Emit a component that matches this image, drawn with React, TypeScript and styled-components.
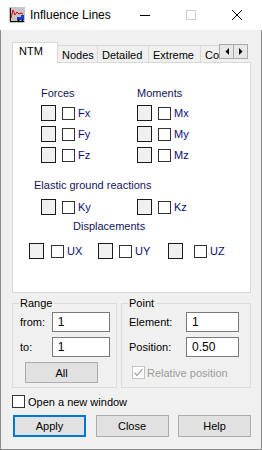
import React from 'react';
import styled, { createGlobalStyle } from 'styled-components';

const GlobalStyle = createGlobalStyle`
  html, body {
    margin: 0;
    padding: 0;
    background: #f0f0f0;
  }
  body {
    font-family: "Liberation Sans", Arial, sans-serif;
    font-size: 11px;
    color: #000;
  }
  * {
    box-sizing: border-box;
  }
`;

const Window = styled.div`
  width: 262px;
  height: 450px;
  display: flex;
  flex-direction: column;
  background: #f0f0f0;
  overflow: hidden;
`;

const TitleBar = styled.div`
  flex: none;
  height: 30px;
  display: flex;
  align-items: center;
  background: #fff;
  padding-left: 9px;
`;

const Title = styled.span`
  margin-left: 5px;
  font-size: 12px;
`;

const Controls = styled.div`
  margin-left: auto;
  margin-right: 2px;
  display: flex;
`;

const ControlButton = styled.div`
  width: 46px;
  height: 30px;
  display: flex;
  align-items: center;
  justify-content: center;
`;

const Body = styled.div`
  flex: 1;
  display: flex;
  flex-direction: column;
  padding: 12px 10px 0 11px;
  border: 1px solid #8c8c8c;
  border-top: none;
`;

// tabs
const TabStrip = styled.div`
  flex: none;
  display: flex;
  height: 21px;
  margin-bottom: -1px;
  position: relative;
  z-index: 1;
`;

const Tabs = styled.div`
  display: flex;
  align-items: flex-end;
  width: 207px;
  overflow: hidden;
`;

const Tab = styled.div<{ $w: number; $active?: boolean; $first?: boolean }>`
  flex: none;
  width: ${(p) => p.$w}px;
  height: ${(p) => (p.$active ? 21 : 18)}px;
  padding: ${(p) => (p.$active ? 1 : 2)}px 0 0 ${(p) => (p.$active ? 6 : 4)}px;
  line-height: 14px;
  white-space: nowrap;
  background: ${(p) => (p.$active ? '#fff' : '#f0f0f0')};
  border-top: 1px solid #d9d9d9;
  border-right: 1px solid #d9d9d9;
  border-left: ${(p) => (p.$first ? '1px solid #d9d9d9' : 'none')};
  border-bottom: ${(p) => (p.$active ? 'none' : '1px solid #d9d9d9')};
`;

const Scroller = styled.div`
  display: flex;
  margin-top: 2px;
  height: 15px;
`;

const ScrollButton = styled.div`
  width: 15px;
  height: 15px;
  display: flex;
  align-items: center;
  justify-content: center;
  background: #e6e6e6;
  border: 1px solid #a9a9a9;
  & + & {
    border-left: none;
    width: 14px;
  }
`;

const Panel = styled.div`
  flex: none;
  height: 231px;
  background: #fff;
  border: 1px solid #d9d9d9;
  padding-top: 23px;
`;

const Columns = styled.div<{ $left: number; $top?: number; $cols: string }>`
  display: grid;
  grid-template-columns: ${(p) => p.$cols};
  margin: ${(p) => p.$top || 0}px 0 0 ${(p) => p.$left}px;
`;

const Column = styled.div`
  display: flex;
  flex-direction: column;
  gap: 5px;
`;

const SectionLabel = styled.div<{ $left?: number; $top?: number }>`
  line-height: 14px;
  color: #14145a;
  margin: ${(p) => p.$top || 0}px 0 0 ${(p) => p.$left || 0}px;
`;

const Item = styled.div`
  display: flex;
  align-items: center;
  height: 16px;
`;

const BigBox = styled.div<{ $gap?: number }>`
  width: 15px;
  height: 16px;
  background: #f0f0f0;
  border: 1px solid #1a1a1a;
  margin-right: ${(p) => p.$gap ?? 6}px;
`;

const Check = styled.div<{ $disabled?: boolean }>`
  flex: none;
  width: 13px;
  height: 13px;
  background: #fff;
  border: 1px solid ${(p) => (p.$disabled ? '#c4c4c4' : '#333')};
  display: flex;
  align-items: center;
  justify-content: center;
`;

const ItemLabel = styled.span`
  margin-left: 3px;
  color: #0b0b78;
  line-height: 14px;
`;

// lower groups
const Groups = styled.div`
  display: flex;
  gap: 4px;
  margin-top: 3px;
`;

const Group = styled.fieldset<{ $w: number }>`
  width: ${(p) => p.$w}px;
  margin: 0;
  padding: 0 6px 4px 6px;
  border: 1px solid #dcdcdc;
  min-width: 0;
`;

const Legend = styled.legend`
  padding: 0 2px 0 1px;
  line-height: 14px;
`;

const FieldRow = styled.div<{ $top?: number }>`
  display: flex;
  align-items: center;
  margin-top: ${(p) => p.$top ?? 5}px;
  padding-left: 1px;
`;

const FieldLabel = styled.span<{ $w: number }>`
  width: ${(p) => p.$w}px;
`;

const Input = styled.div<{ $w: number }>`
  width: ${(p) => p.$w}px;
  height: 20px;
  background: #fff;
  border: 1px solid #7a7a7a;
  padding-left: 5px;
  font-size: 12px;
  line-height: 18px;
`;

const Button = styled.div<{ $default?: boolean }>`
  width: 73px;
  height: 22px;
  display: flex;
  align-items: center;
  justify-content: center;
  background: #e1e1e1;
  border: ${(p) => (p.$default ? '2px solid #0078d7' : '1px solid #adadad')};
`;

const SmallButton = styled(Button)`
  height: 21px;
  margin: 5px 0 0 6px;
`;

const OptionRow = styled.div<{ $top: number; $left?: number; $muted?: boolean }>`
  display: flex;
  align-items: center;
  height: ${(p) => (p.$muted ? 21 : 13)}px;
  margin: ${(p) => p.$top}px 0 0 ${(p) => p.$left || 0}px;
  color: ${(p) => (p.$muted ? '#9b9b9b' : '#000')};
  span {
    margin-left: ${(p) => (p.$muted ? 2 : 3)}px;
  }
`;

const ButtonRow = styled.div`
  display: flex;
  justify-content: space-between;
  margin: 7px 0 0 1px;
`;

const AppIcon = () => (
  <svg width="16" height="16" viewBox="0 0 16 16">
    <rect x="0" y="0" width="16" height="16" fill="#c6c6c6" />
    <path d="M1.5 1v13.5H15" stroke="#000" fill="none" />
    <polyline points="2,11 4,3 6,8 8,5 10,7 12,6 14,7" stroke="#e00000" fill="none" strokeWidth="1" />
    <rect x="8" y="10" width="7" height="3" fill="#1a3fd0" />
    <rect x="12" y="8" width="3" height="3" fill="#1a3fd0" />
    <circle cx="9.5" cy="13.5" r="1" fill="#000" />
    <circle cx="13.5" cy="13.5" r="1" fill="#000" />
  </svg>
);

const CheckMark = ({ color }: { color: string }) => (
  <svg width="11" height="11" viewBox="0 0 11 11">
    <polyline points="1.5,5.5 4,8.5 9.5,2" stroke={color} strokeWidth="1.2" fill="none" />
  </svg>
);

type Entry = { label: string; gap?: number };

const Toggle = ({ label, gap }: Entry) => (
  <Item>
    <BigBox $gap={gap} />
    <Check />
    <ItemLabel>{label}</ItemLabel>
  </Item>
);

const App = () => {
  return (
    <>
      <GlobalStyle />
      <Window>
        <TitleBar>
          <AppIcon />
          <Title>Influence Lines</Title>
          <Controls>
            <ControlButton>
              <svg width="10" height="10" viewBox="0 0 10 10">
                <line x1="0" y1="5.5" x2="10" y2="5.5" stroke="#000" />
              </svg>
            </ControlButton>
            <ControlButton>
              <svg width="10" height="10" viewBox="0 0 10 10">
                <rect x="0.5" y="0.5" width="9" height="9" stroke="#cccccc" fill="none" />
              </svg>
            </ControlButton>
            <ControlButton>
              <svg width="10" height="10" viewBox="0 0 10 10">
                <path d="M0 0L10 10M10 0L0 10" stroke="#000" strokeWidth="1" />
              </svg>
            </ControlButton>
          </Controls>
        </TitleBar>

        <Body>
          <TabStrip>
            <Tabs>
              <Tab $w={46} $active $first>NTM</Tab>
              <Tab $w={40}>Nodes</Tab>
              <Tab $w={51}>Detailed</Tab>
              <Tab $w={52}>Extreme</Tab>
              <Tab $w={40}>Co</Tab>
            </Tabs>
            <Scroller>
              <ScrollButton>
                <svg width="4" height="7" viewBox="0 0 4 7">
                  <polygon points="4,0 4,7 0.5,3.5" fill="#000" />
                </svg>
              </ScrollButton>
              <ScrollButton>
                <svg width="4" height="7" viewBox="0 0 4 7">
                  <polygon points="0,0 0,7 3.5,3.5" fill="#000" />
                </svg>
              </ScrollButton>
            </Scroller>
          </TabStrip>

          <Panel>
            <Columns $left={28} $cols="96px 96px">
              <Column>
                <SectionLabel>Forces</SectionLabel>
                <Toggle label="Fx" />
                <Toggle label="Fy" />
                <Toggle label="Fz" />
              </Column>
              <Column>
                <SectionLabel>Moments</SectionLabel>
                <Toggle label="Mx" />
                <Toggle label="My" />
                <Toggle label="Mz" />
              </Column>
            </Columns>

            <SectionLabel $left={21} $top={15}>Elastic ground reactions</SectionLabel>
            <Columns $left={28} $top={7} $cols="96px 96px">
              <Toggle label="Ky" />
              <Toggle label="Kz" />
            </Columns>

            <SectionLabel $left={60} $top={4}>Displacements</SectionLabel>
            <Columns $left={16} $top={10} $cols="69px 70px 70px">
              <Toggle label="UX" gap={7} />
              <Toggle label="UY" gap={6} />
              <Toggle label="UZ" gap={11} />
            </Columns>
          </Panel>

          <Groups>
            <Group $w={105}>
              <Legend>Range</Legend>
              <FieldRow $top={2}>
                <FieldLabel $w={32}>from:</FieldLabel>
                <Input $w={59}>1</Input>
              </FieldRow>
              <FieldRow>
                <FieldLabel $w={32}>to:</FieldLabel>
                <Input $w={59}>1</Input>
              </FieldRow>
              <SmallButton>All</SmallButton>
            </Group>
            <Group $w={130}>
              <Legend>Point</Legend>
              <FieldRow $top={2}>
                <FieldLabel $w={57}>Element:</FieldLabel>
                <Input $w={53}>1</Input>
              </FieldRow>
              <FieldRow>
                <FieldLabel $w={57}>Position:</FieldLabel>
                <Input $w={53}>0.50</Input>
              </FieldRow>
              <OptionRow $top={5} $left={4} $muted>
                <Check $disabled>
                  <CheckMark color="#a8a8a8" />
                </Check>
                <span>Relative position</span>
              </OptionRow>
            </Group>
          </Groups>

          <OptionRow $top={7}>
            <Check />
            <span>Open a new window</span>
          </OptionRow>

          <ButtonRow>
            <Button $default>Apply</Button>
            <Button>Close</Button>
            <Button>Help</Button>
          </ButtonRow>
        </Body>
      </Window>
    </>
  );
};

export default App;
